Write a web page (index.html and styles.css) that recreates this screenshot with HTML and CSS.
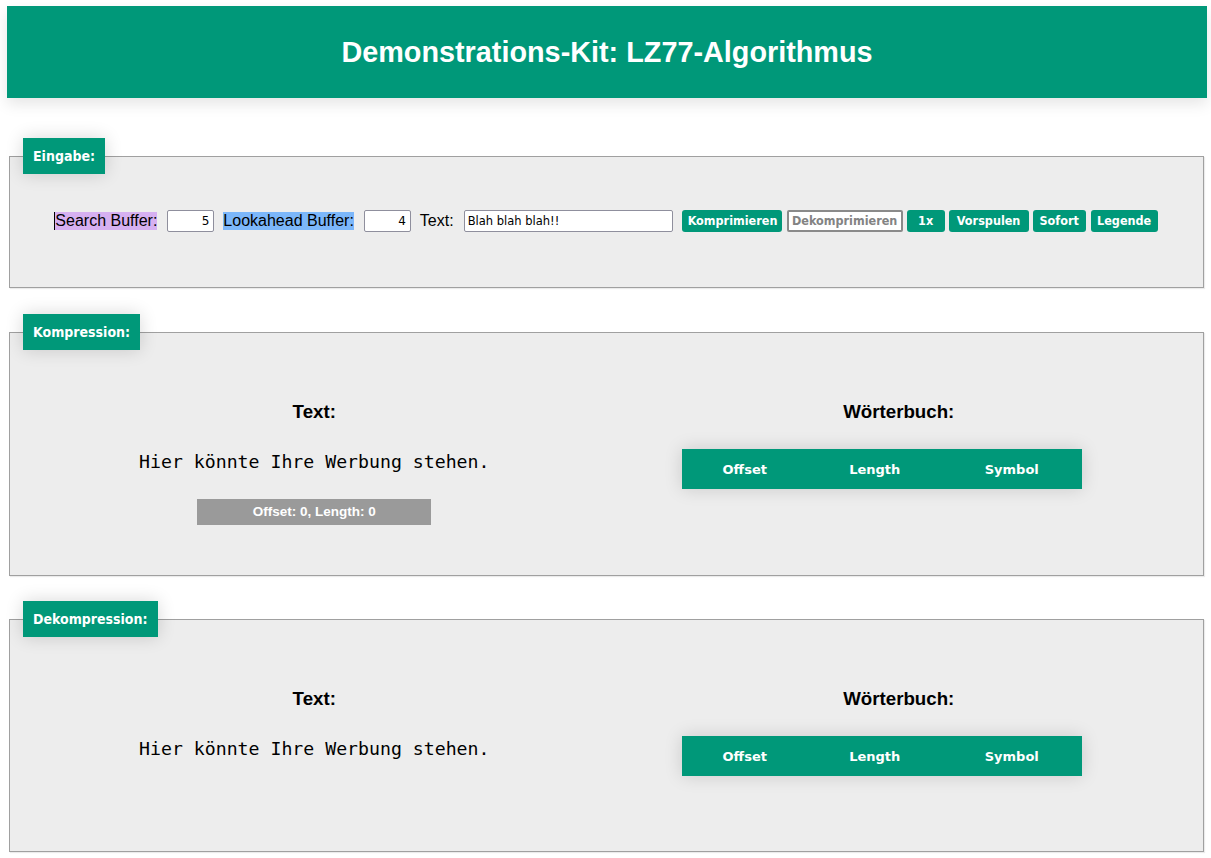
FILE: index.html
```html
<!DOCTYPE html>
<html lang="de">
<head>
<meta charset="utf-8">
<title>Demonstrations-Kit: LZ77-Algorithmus</title>
<link rel="stylesheet" href="styles.css">
</head>
<body>
<header class="topbar">
  <h1 class="topbar-title">Demonstrations-Kit: LZ77-Algorithmus</h1>
</header>

<fieldset class="panel panel-input">
  <legend class="panel-legend">Eingabe:</legend>
  <div class="controls">
    <span class="label label-search">Search Buffer:</span>
    <input class="num-input" type="text" value="5">
    <span class="label label-lookahead">Lookahead Buffer:</span>
    <input class="num-input" type="text" value="4">
    <span class="label label-text">Text:</span>
    <input class="text-input" type="text" value="Blah blah blah!!">
    <button class="btn btn-compress">Komprimieren</button>
    <button class="btn btn-disabled" disabled>Dekomprimieren</button>
    <button class="btn btn-speed">1x</button>
    <button class="btn btn-forward">Vorspulen</button>
    <button class="btn btn-instant">Sofort</button>
    <button class="btn btn-last">Legende</button>
  </div>
</fieldset>

<fieldset class="panel panel-compress">
  <legend class="panel-legend">Kompression:</legend>
  <div class="panel-body">
    <div class="column">
      <h3 class="column-title">Text:</h3>
      <div class="mono-text">Hier könnte Ihre Werbung stehen.</div>
      <div class="status-bar">Offset: 0, Length: 0</div>
    </div>
    <div class="column">
      <h3 class="column-title">Wörterbuch:</h3>
      <table class="dict">
        <thead>
          <tr>
            <th class="col-offset">Offset</th>
            <th class="col-length">Length</th>
            <th class="col-symbol">Symbol</th>
          </tr>
        </thead>
      </table>
    </div>
  </div>
</fieldset>

<fieldset class="panel panel-decompress">
  <legend class="panel-legend">Dekompression:</legend>
  <div class="panel-body panel-body-decompress">
    <div class="column">
      <h3 class="column-title">Text:</h3>
      <div class="mono-text">Hier könnte Ihre Werbung stehen.</div>
    </div>
    <div class="column">
      <h3 class="column-title">Wörterbuch:</h3>
      <table class="dict">
        <thead>
          <tr>
            <th class="col-offset">Offset</th>
            <th class="col-length">Length</th>
            <th class="col-symbol">Symbol</th>
          </tr>
        </thead>
      </table>
    </div>
  </div>
</fieldset>
</body>
</html>
```

FILE: styles.css
```css
html, body {
  margin: 0;
  padding: 0;
  background: #ffffff;
}

body {
  font-family: "Liberation Sans", Arial, sans-serif;
  color: #000;
  padding-bottom: 6px;
}

.topbar {
  margin: 6px 4px 0 7px;
  height: 92px;
  background: #009879;
  box-shadow: 0 6px 14px rgba(0, 0, 0, 0.10);
  display: flex;
  align-items: center;
  justify-content: center;
}

.topbar-title {
  margin: 0;
  color: #ffffff;
  font-family: "Liberation Sans", Arial, sans-serif;
  font-weight: bold;
  font-size: 28.8px;
  line-height: 34px;
}

.panel {
  margin: 40px 7px 0 9px;
  padding: 0 12px;
  border: 1px solid #a0a0a0;
  background: #ededed;
  box-shadow: 1px 1px 1px rgba(0, 0, 0, 0.08);
  min-width: 0;
}

.panel-compress {
  margin-top: 26px;
}

.panel-decompress {
  margin-top: 25px;
}

.panel-legend {
  margin-left: 1px;
  padding: 10px 10px;
  background: #009879;
  color: #ffffff;
  font-family: "DejaVu Sans Condensed", "DejaVu Sans", Verdana, sans-serif;
  font-weight: bold;
  font-size: 14px;
  line-height: 16px;
  box-shadow: 0 0 18px rgba(0, 0, 0, 0.16);
}

/* ---------- Eingabe ---------- */
.controls {
  display: flex;
  align-items: center;
  justify-content: center;
  padding: 36px 0 55px;
  height: 22px;
}

.label {
  font-family: "Liberation Sans", Arial, sans-serif;
  font-size: 16px;
  line-height: 18px;
  margin-right: 10px;
}

.label-search {
  background: #d6b0f1;
  border-left: 1px solid #000;
  margin-left: -1px;
}

.label-lookahead {
  background: #7cb7fa;
}

.num-input,
.text-input {
  box-sizing: border-box;
  height: 22px;
  border: 1px solid #8f8f9d;
  border-radius: 2px;
  background: #ffffff;
  margin: 0 9px 0 0;
  font-family: "DejaVu Sans", Verdana, sans-serif;
  color: #000;
  outline: none;
}

.num-input {
  width: 47px;
  text-align: right;
  font-size: 12px;
  padding: 0 4px;
}

.text-input {
  width: 209px;
  font-size: 11.5px;
  padding: 0 3px;
}

.btn {
  box-sizing: border-box;
  height: 22px;
  margin: 0 4px 0 0;
  padding: 0 6px;
  border: none;
  border-radius: 3px;
  background: #009879;
  color: #ffffff;
  font-family: "DejaVu Sans Condensed", "DejaVu Sans", Verdana, sans-serif;
  font-weight: bold;
  font-size: 12.5px;
  line-height: 22px;
}

.btn-compress {
  width: 100px;
  margin-right: 5px;
}

.btn-disabled {
  width: 116px;
  background: #ffffff;
  color: #838383;
  border: 2px solid #8a8a8a;
  border-radius: 2px;
  padding: 0;
  line-height: 18px;
}

.btn-speed {
  width: 38px;
}

.btn-forward {
  width: 80px;
}

.btn-instant {
  width: 53px;
  margin-right: 5px;
}

.btn-last {
  width: 67px;
  margin-right: 0;
}

/* ---------- Kompression / Dekompression ---------- */
.panel-body {
  display: grid;
  grid-template-columns: 1fr 1fr;
  align-items: start;
  padding: 51px 0 50px;
}

.panel-body-decompress {
  padding: 51px 0 75px;
}

.column {
  display: flex;
  flex-direction: column;
  align-items: center;
}

.column-title {
  margin: 0;
  font-family: "Liberation Sans", Arial, sans-serif;
  font-weight: bold;
  font-size: 18.72px;
  line-height: 22px;
}

.mono-text {
  margin-top: 28px;
  font-family: "DejaVu Sans Mono", "Liberation Mono", monospace;
  font-size: 18.2px;
  line-height: 22px;
}

.status-bar {
  margin-top: 26px;
  width: 234px;
  height: 26px;
  background: #9a9a9a;
  color: #ffffff;
  font-family: "Liberation Sans", Arial, sans-serif;
  font-weight: bold;
  font-size: 13.5px;
  line-height: 26px;
  text-align: center;
}

.dict {
  margin: 26px 34px 0 0;
  width: 400px;
  border-collapse: collapse;
  table-layout: fixed;
  background: #009879;
  box-shadow: 0 0 18px rgba(0, 0, 0, 0.15);
}

.dict th {
  height: 40px;
  padding: 0;
  color: #ffffff;
  font-family: "DejaVu Sans", Verdana, sans-serif;
  font-weight: bold;
  font-size: 13px;
  text-align: center;
}

.col-offset { width: 126px; }
.col-length { width: 134px; }
.col-symbol { width: 140px; }
```
